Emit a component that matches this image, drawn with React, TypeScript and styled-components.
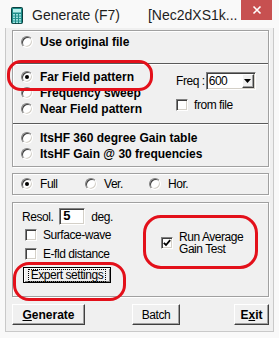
import styled, { createGlobalStyle } from "styled-components";

const GlobalStyle = createGlobalStyle`
  html, body {
    margin: 0;
    padding: 0;
    background: #f9f9f9;
  }
  body {
    font-family: "Liberation Sans", Arial, sans-serif;
    color: #000;
  }
`;

// the dialog's plain labels use a narrow face; squeeze Liberation Sans to match
const narrow = `
  font-family: "Liberation Sans Narrow", "Liberation Sans", Arial, sans-serif;
  font-size: 12px;
  letter-spacing: -0.45px;
`;

export default function App() {
  return (
    <>
      <GlobalStyle />
      <Window>
        <TitleBar>
          <CalcIcon />
          <TitleText>Generate (F7)</TitleText>
          <FileName>[Nec2dXS1k...</FileName>
          <CloseButton>
            <svg width="10" height="10" viewBox="0 0 10 10">
              <path d="M1.5 1.5 L8.5 8.5 M8.5 1.5 L1.5 8.5" stroke="#fff" strokeWidth="1.6" />
            </svg>
          </CloseButton>
        </TitleBar>

        <Frame>
          <Client>
            <Group>
              <Section $h={32} $pt={3}>
                <Radio label="Use original file" bold />
              </Section>
              <Divider />
              <Section $h={58} $pt={4}>
                <LeftCol>
                  <Radio label="Far Field pattern" bold checked />
                  <Radio label="Frequency sweep" bold />
                  <Radio label="Near Field pattern" bold />
                </LeftCol>
                <FreqCol>
                  <FreqRow>
                    <Label>Freq :</Label>
                    <Select>
                      <SelectValue>600</SelectValue>
                      <DropButton>
                        <svg width="7" height="4" viewBox="0 0 7 4">
                          <path d="M0 0 H7 L3.5 4 Z" fill="#000" />
                        </svg>
                      </DropButton>
                    </Select>
                  </FreqRow>
                  <Check label="from file" />
                </FreqCol>
              </Section>
              <Divider />
              <Section $h={41} $pt={5}>
                <LeftCol>
                  <Radio label="ItsHF 360 degree Gain table" bold />
                  <Radio label="ItsHF Gain @ 30 frequencies" bold />
                </LeftCol>
              </Section>
            </Group>

            <PlaneGroup>
              <PlaneOption>
                <Radio label="Full" checked />
              </PlaneOption>
              <PlaneOption>
                <Radio label="Ver." />
              </PlaneOption>
              <PlaneOption>
                <Radio label="Hor." />
              </PlaneOption>
            </PlaneGroup>

            <OptionsGroup>
              <OptionsLeft>
                <ResolRow>
                  <Label>Resol.</Label>
                  <NumberBox>5</NumberBox>
                  <Label>deg.</Label>
                </ResolRow>
                <CheckRow>
                  <Check label="Surface-wave" />
                </CheckRow>
                <CheckRow>
                  <Check label="E-fld distance" />
                </CheckRow>
                <ExpertButton>
                  <FocusText>Expert settings</FocusText>
                </ExpertButton>
              </OptionsLeft>
              <OptionsRight>
                <Check label={"Run Average\nGain Test"} checked />
              </OptionsRight>
            </OptionsGroup>

            <ButtonBar>
              <PushButton $w={73} $bold>
                <u>G</u>enerate
              </PushButton>
              <PushButton $w={48} $ml={47}>
                Batch
              </PushButton>
              <PushButton $w={35} $bold $ml="auto">
                E<u>x</u>it
              </PushButton>
            </ButtonBar>
          </Client>
        </Frame>

        <Marker $x={7} $y={60} $w={146} $h={31} $r={14} />
        <Marker $x={143} $y={215} $w={115} $h={54} $r={18} />
        <Marker $x={13} $y={262} $w={113} $h={39} $r={16} />
      </Window>
    </>
  );
}

function CalcIcon() {
  const keys = [];
  for (let r = 0; r < 4; r++) {
    for (let c = 0; c < 3; c++) {
      keys.push(<rect key={`${r}-${c}`} x={2 + c * 3} y={7 + r * 2.5} width="2" height="1.6" fill="#9fe3df" />);
    }
  }
  return (
    <IconBox>
      <svg width="12" height="17" viewBox="0 0 12 17">
        <rect x="0.5" y="0.5" width="11" height="16" rx="1" fill="#1f8d8a" stroke="#0b3f3e" />
        <rect x="2" y="2" width="8" height="3.5" fill="#b9f0ec" />
        {keys}
      </svg>
    </IconBox>
  );
}

function Radio({ label, checked, bold }: { label: string; checked?: boolean; bold?: boolean }) {
  return (
    <OptionRow>
      <RadioCircle>{checked && <RadioDot />}</RadioCircle>
      <OptionText $bold={bold}>{label}</OptionText>
    </OptionRow>
  );
}

function Check({ label, checked }: { label: string; checked?: boolean }) {
  return (
    <CheckLine>
      <CheckBox>
        {checked && (
          <svg width="8" height="8" viewBox="0 0 8 8">
            <path d="M0.8 3.8 L3 6 L7.2 1.2" stroke="#000" strokeWidth="1.8" fill="none" />
          </svg>
        )}
      </CheckBox>
      <CheckText>{label}</CheckText>
    </CheckLine>
  );
}

const Window = styled.div`
  position: relative;
  width: 279px;
  height: 338px;
  background: #f9f9f9;
  display: flex;
  flex-direction: column;
  overflow: hidden;
`;

const TitleBar = styled.div`
  height: 28px;
  display: flex;
  align-items: flex-start;
  flex-shrink: 0;
`;

const IconBox = styled.div`
  margin: 7px 0 0 11px;
  display: flex;
`;

const TitleText = styled.div`
  margin-left: 9px;
  padding-top: 7px;
  font-size: 14px;
  line-height: 16px;
  color: #1e1e1e;
  white-space: nowrap;
`;

const FileName = styled(TitleText)`
  margin-left: 28px;
`;

const CloseButton = styled.div`
  margin-left: auto;
  margin-right: 7px;
  width: 31px;
  height: 20px;
  background: #c75050;
  display: flex;
  align-items: center;
  justify-content: center;
  flex-shrink: 0;
`;

const Frame = styled.div`
  margin: 0 5px 6px 5px;
  border: 1px solid #c9c9c9;
  border-top: none;
  background: #f0f0f0;
`;

const Client = styled.div`
  padding: 2px 4px 6px 6px;
  display: flex;
  flex-direction: column;
`;

const Group = styled.div`
  border: 1px solid #a0a0a0;
  box-shadow: inset 1px 1px 0 #fff, 1px 1px 0 #fff;
  display: flex;
  flex-direction: column;
`;

const Section = styled.div<{ $h: number; $pt: number }>`
  height: ${(p) => p.$h}px;
  box-sizing: border-box;
  padding: ${(p) => p.$pt}px 0 0 8px;
  display: flex;
  align-items: flex-start;
`;

const Divider = styled.div`
  border-top: 1px solid #5a5a5a;
  border-bottom: 1px solid #fff;
`;

const LeftCol = styled.div`
  width: 155px;
  display: flex;
  flex-direction: column;
  flex-shrink: 0;
`;

const OptionRow = styled.div`
  height: 16px;
  display: flex;
  align-items: center;
  gap: 7px;
  white-space: nowrap;
`;

const RadioCircle = styled.span`
  width: 12px;
  height: 12px;
  box-sizing: border-box;
  border-radius: 50%;
  background: #fff;
  border: 1px solid;
  border-color: #808080 #fff #fff #808080;
  box-shadow: inset 1px 1px 0 #404040, inset -1px -1px 0 #d4d0c8;
  display: flex;
  align-items: center;
  justify-content: center;
  flex-shrink: 0;
`;

const RadioDot = styled.span`
  width: 4px;
  height: 4px;
  border-radius: 50%;
  background: #000;
`;

const OptionText = styled.span<{ $bold?: boolean }>`
  ${(p) =>
    p.$bold
      ? `font-family: "Liberation Sans", Arial, sans-serif; font-weight: 700; font-size: 12px;`
      : narrow}
  line-height: 16px;
`;

const FreqCol = styled.div`
  padding-top: 3px;
  display: flex;
  flex-direction: column;
  gap: 9px;
`;

const FreqRow = styled.div`
  display: flex;
  align-items: center;
  gap: 1px;
`;

const Label = styled.span`
  ${narrow}
  line-height: 16px;
  white-space: nowrap;
`;

const Select = styled.div`
  width: 50px;
  height: 18px;
  box-sizing: border-box;
  background: #fff;
  border: 1px solid;
  border-color: #808080 #fff #fff #808080;
  box-shadow: inset 1px 1px 0 #404040, inset -1px -1px 0 #d4d0c8;
  display: flex;
  align-items: center;
  padding: 0 1px 0 2px;
`;

const SelectValue = styled.span`
  flex: 1;
  ${narrow}
  line-height: 14px;
`;

const DropButton = styled.span`
  width: 12px;
  height: 14px;
  box-sizing: border-box;
  background: #f0f0f0;
  border: 1px solid;
  border-color: #fff #404040 #404040 #fff;
  box-shadow: inset -1px -1px 0 #a0a0a0;
  display: flex;
  align-items: center;
  justify-content: center;
`;

const CheckLine = styled.div`
  display: flex;
  align-items: center;
  gap: 6px;
`;

const CheckBox = styled.span`
  width: 12px;
  height: 12px;
  box-sizing: border-box;
  background: #fff;
  border: 1px solid;
  border-color: #808080 #fff #fff #808080;
  box-shadow: inset 1px 1px 0 #404040, inset -1px -1px 0 #d4d0c8;
  display: flex;
  align-items: center;
  justify-content: center;
  flex-shrink: 0;
`;

const CheckText = styled.span`
  ${narrow}
  line-height: 12px;
  white-space: pre;
`;

const PlaneGroup = styled(Group)`
  margin-top: 6px;
  height: 22px;
  box-sizing: border-box;
  flex-direction: row;
  align-items: center;
  padding-left: 8px;
`;

const PlaneOption = styled.div`
  width: 64px;
`;

const OptionsGroup = styled(Group)`
  margin-top: 7px;
  height: 95px;
  box-sizing: border-box;
  flex-direction: row;
`;

const OptionsLeft = styled.div`
  width: 148px;
  padding: 5px 0 0 9px;
  box-sizing: border-box;
  display: flex;
  flex-direction: column;
  align-items: flex-start;
`;

const ResolRow = styled.div`
  display: flex;
  align-items: center;
  gap: 6px;
`;

const NumberBox = styled.span`
  width: 26px;
  height: 17px;
  box-sizing: border-box;
  background: #fff;
  border: 1px solid;
  border-color: #808080 #fff #fff #808080;
  box-shadow: inset 1px 1px 0 #404040, inset -1px -1px 0 #d4d0c8;
  padding: 0 0 0 3px;
  font-weight: 700;
  font-size: 13px;
  line-height: 13px;
`;

const CheckRow = styled.div`
  height: 19px;
  display: flex;
  align-items: center;
  padding-left: 3px;
  &:first-of-type {
    margin-top: 6px;
  }
`;

const ExpertButton = styled.div`
  margin: 4px 0 0 1px;
  width: 88px;
  height: 16px;
  box-sizing: border-box;
  background: #f0f0f0;
  border: 1px solid #000;
  box-shadow: inset 1px 1px 0 #fff, inset -1px -1px 0 #808080;
  display: flex;
  align-items: center;
  justify-content: center;
`;

const FocusText = styled.span`
  ${narrow}
  line-height: 11px;
  white-space: nowrap;
  outline: 1px dotted #000;
  padding: 0 2px;
`;

const OptionsRight = styled.div`
  padding-top: 28px;
`;

const ButtonBar = styled.div`
  margin-top: 7px;
  display: flex;
`;

const PushButton = styled.div<{ $w: number; $bold?: boolean; $ml?: number | "auto" }>`
  width: ${(p) => p.$w}px;
  height: 21px;
  margin-left: ${(p) => (p.$ml === "auto" ? "auto" : `${p.$ml ?? 0}px`)};
  box-sizing: border-box;
  background: #f0f0f0;
  border: 1px solid;
  border-color: #fff #404040 #404040 #fff;
  box-shadow: inset -1px -1px 0 #a0a0a0;
  display: flex;
  align-items: center;
  justify-content: center;
  ${(p) =>
    p.$bold
      ? `font-family: "Liberation Sans", Arial, sans-serif; font-weight: 700; font-size: 12px;`
      : narrow}
`;

const Marker = styled.div<{ $x: number; $y: number; $w: number; $h: number; $r: number }>`
  position: absolute;
  left: ${(p) => p.$x}px;
  top: ${(p) => p.$y}px;
  width: ${(p) => p.$w}px;
  height: ${(p) => p.$h}px;
  box-sizing: border-box;
  border: 3px solid #e3101a;
  border-radius: ${(p) => p.$r}px;
  pointer-events: none;
`;
